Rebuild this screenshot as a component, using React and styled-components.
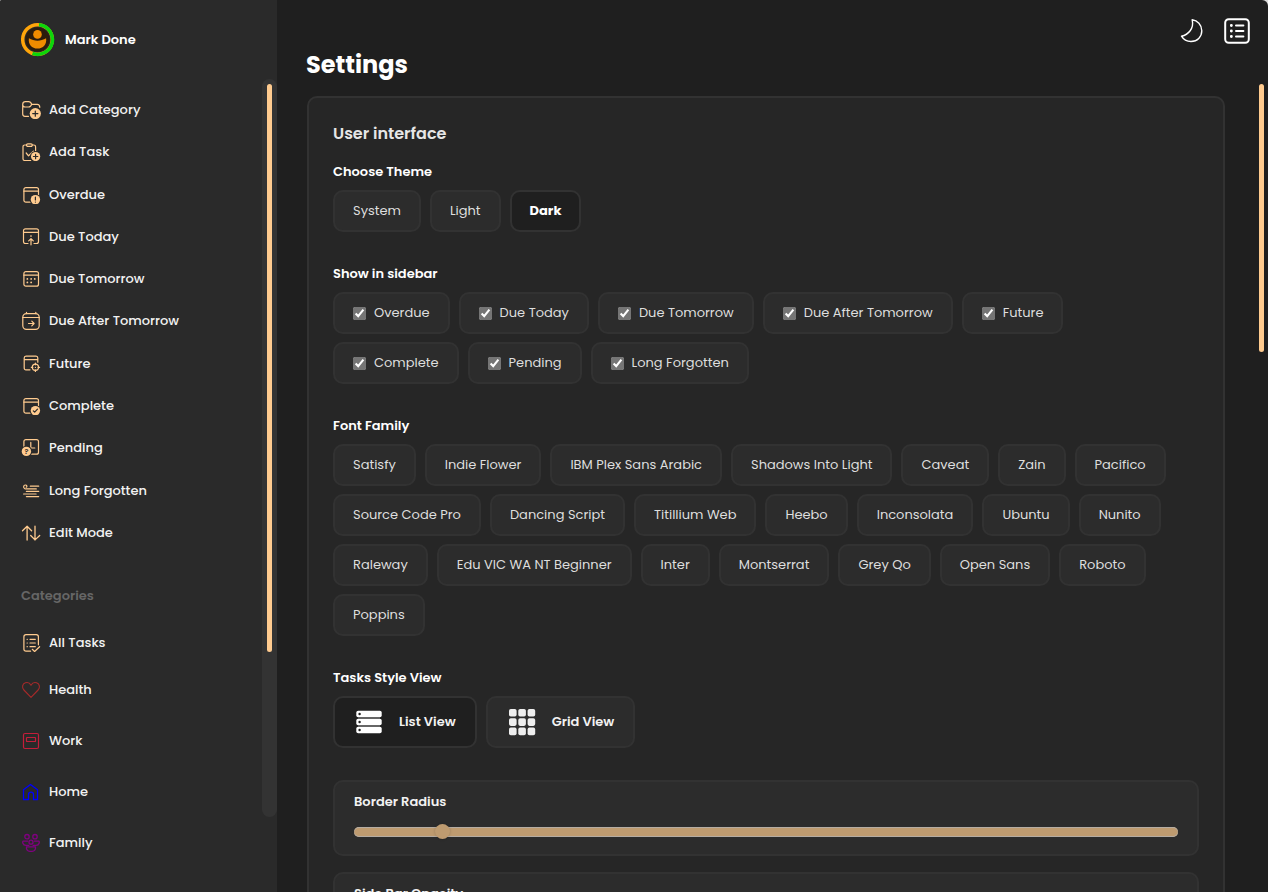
import { useState } from "react";
import styled, { createGlobalStyle } from "styled-components";

const GlobalStyle = createGlobalStyle`
    :root {
        --accent: #ffcb8f;
        --page: #1f1f1f;
        --sidebar: #2a2a2a;
        --panel: #262626;
        --chip: #2c2c2c;
        --line: #323232;
    }
    * {
        box-sizing: border-box;
    }
    body {
        margin: 0;
        background-color: #ddd;
        color: #fff;
        font-family: Poppins, Inter, sans-serif;
        font-size: 13px;
        line-height: 20px;
    }
    button, input {
        font: inherit;
        color: inherit;
    }
    h1, h2, h3, p, ul {
        margin: 0;
        padding: 0;
    }
`
const Layout = styled.div`
    display: flex;
    height: 100vh;
    overflow: hidden;
    border-radius: 2px 6px 0 0;
    background-color: var(--page);
`
const Sidebar = styled.aside`
    flex: 0 0 277px;
    display: flex;
    flex-direction: column;
    background-color: var(--sidebar);
`
const Profile = styled.div`
    display: flex;
    align-items: center;
    gap: 10px;
    height: 79px;
    padding-left: 20px;
    font-weight: 600;
    svg {
        width: 35px;
        height: 35px;
    }
`
const SidebarBody = styled.div`
    flex: 1;
    display: flex;
    min-height: 0;
`
const SidebarScroll = styled.nav`
    flex: 1;
    overflow: hidden;
    padding: 10px 0 0 21px;
`
const NavList = styled.ul`
    display: grid;
    list-style: none;
    min-height: ${({ $minHeight }) => $minHeight || 0}px;
`
const NavItem = styled.li`
    display: flex;
    align-items: center;
    height: ${({ $height }) => ($height ? `${$height}px` : "auto")};
`
const NavLink = styled.a`
    display: flex;
    align-items: center;
    gap: 8px;
    color: #f2f2f2;
    font-weight: 500;
    text-decoration: none;
    svg {
        width: 20px;
        height: 20px;
        margin-bottom: 2px;
        color: ${({ $color }) => $color || "var(--accent)"};
    }
`
const NavHeading = styled.h3`
    padding: 32px 0 15px;
    font-size: 13px;
    font-weight: 600;
    color: #666;
`
const Rail = styled.div`
    flex: 0 0 15px;
    margin-bottom: 75px;
    padding: 5px;
    border-radius: 8px;
    background-color: #333;
`
const RailThumb = styled.div`
    width: 5px;
    height: 78%;
    border-radius: 3px;
    background-color: var(--accent);
`
const Main = styled.main`
    position: relative;
    flex: 1;
    min-width: 0;
`
const PageThumb = styled.div`
    position: absolute;
    top: 84px;
    right: 4px;
    width: 5px;
    height: 30%;
    border-radius: 3px;
    background-color: var(--accent);
`
const Header = styled.header`
    display: flex;
    justify-content: space-between;
    align-items: flex-start;
    height: 96px;
    padding: 18px 18px 0 29px;
`
const PageTitle = styled.h1`
    padding-top: 31px;
    font-size: 24px;
    line-height: 32px;
    font-weight: 700;
`
const HeaderActions = styled.div`
    display: flex;
    gap: 19px;
`
const IconButton = styled.button`
    display: flex;
    padding: 0;
    border: none;
    background: none;
    cursor: pointer;
    svg {
        width: 26px;
        height: 26px;
    }
`
const Panel = styled.section`
    margin: 0 43px 0 30px;
    padding: 24px;
    border: 2px solid var(--line);
    border-radius: 10px;
    background-color: var(--panel);
`
const PanelTitle = styled.h2`
    margin-bottom: 16px;
    font-size: 16px;
    line-height: 24px;
    font-weight: 600;
    color: #e6e6e6;
`
const Group = styled.fieldset`
    min-width: 0;
    margin: 0 0 32px;
    padding: 0;
    border: none;
    legend {
        padding: 0;
        margin-bottom: 8px;
        font-weight: 600;
    }
`
const Chips = styled.div`
    display: flex;
    flex-wrap: wrap;
    gap: 8px 9px;
    padding-right: 8px;
`
const chipColors = ({ $active }) => `
    border: 2px solid var(--line);
    border-radius: 10px;
    background-color: ${$active ? "var(--page)" : "var(--chip)"};
    color: ${$active ? "#fff" : "#dedede"};
`
const Chip = styled.button`
    ${chipColors}
    height: 42px;
    padding: 0 18px;
    font-weight: ${({ $active }) => ($active ? 700 : 400)};
    cursor: pointer;
`
const CheckChip = styled.label`
    ${chipColors}
    display: flex;
    align-items: center;
    gap: 8px;
    height: 42px;
    padding: 0 18px;
    cursor: pointer;
    input {
        width: 13px;
        height: 13px;
        margin: 0;
        accent-color: #757575;
    }
`
const ViewButton = styled.button`
    ${chipColors}
    display: flex;
    align-items: center;
    gap: 16px;
    height: 52px;
    padding: 0 19px 0 20px;
    font-weight: 600;
    color: #f2f2f2;
    cursor: pointer;
    svg {
        width: 28px;
        height: 28px;
    }
`
const SliderCard = styled.div`
    ${chipColors}
    display: flex;
    flex-direction: column;
    gap: 12px;
    height: 76px;
    margin-bottom: 16px;
    padding: 10px 19px;
    label {
        font-weight: 600;
        color: #f2f2f2;
    }
`
const Slider = styled.input`
    appearance: none;
    width: 100%;
    height: 15px;
    margin: 0;
    background: transparent;
    &::-webkit-slider-runnable-track {
        height: 10px;
        border-radius: 5px;
        background-color: #be9b70;
        box-shadow: inset 0 1px #b5aca2, inset 0 -1px #b5aca2;
    }
    &::-webkit-slider-thumb {
        appearance: none;
        width: 15px;
        height: 15px;
        margin-top: -3px;
        border-radius: 50%;
        background-color: #be9b70;
        box-shadow: 0 0 3px rgb(0, 0, 0, 0.2);
    }
`

const Svg = ({ size = 20, width = 1.2, children }) => (
    <svg
        viewBox={`0 0 ${size} ${size}`}
        fill="none"
        stroke="currentColor"
        strokeWidth={width}
        strokeLinecap="round"
        strokeLinejoin="round"
        aria-hidden="true"
    >
        {children}
    </svg>
);

const Badge = ({ x, y, r = 4.7, children }) => (
    <>
        <circle cx={x} cy={y} r={r + 1} fill="#2a2a2a" stroke="none" />
        <circle cx={x} cy={y} r={r} fill="currentColor" stroke="none" />
        <g stroke="#2a2a2a">{children}</g>
    </>
);

const CalendarBox = () => (
    <>
        <rect x="2.9" y="3.6" width="14.6" height="14.6" rx="2" />
        <path d="M2.9 7.2h14.6" />
    </>
);

const icons = {
    addCategory: (
        <Svg>
            <path d="M1.7 5.4C1.7 3.4 2.8 2.6 4.4 2.6h3.2c1.5 0 2.5 1.1 3.1 2.7-.6 1.7-1.6 2.7-3.1 2.7H4.2C2.7 8 1.7 7.2 1.7 5.4ZM10.7 5.3h5.6c1.6 0 2.4.8 2.5 3M1.7 5.4v9.7c0 1.5.8 2.2 2.2 2.2h3.6" />
            <Badge x={14.3} y={14.6} r={5.6}>
                <path d="M14.3 12v5.2M11.7 14.6h5.2" />
            </Badge>
        </Svg>
    ),
    addTask: (
        <Svg>
            <path d="M5.4 4H3.8C2.6 4 2 4.6 2 5.8v11.9C2 18.9 2.6 19.5 3.8 19.5h6M11.4 4h1.4c1.2 0 1.8.6 1.8 1.8v4.4M5.2 12l2.3 2.8 5-4.6" />
            <rect x="5.5" y="2.8" width="5.8" height="2.6" rx="1.3" />
            <Badge x={14.6} y={15.5} r={4.6}>
                <path d="M14.6 13.3v4.4M12.4 15.5h4.4" />
            </Badge>
        </Svg>
    ),
    overdue: (
        <Svg>
            <CalendarBox />
            <Badge x={14.4} y={15.6}>
                <path d="M14.4 13.2v2.8M14.4 18v.1" />
            </Badge>
        </Svg>
    ),
    dueToday: (
        <Svg>
            <path d="M7 17.5H4.5c-1.3 0-2-.7-2-2V4.8c0-1.3.7-2 2-2h11c1.3 0 2 .7 2 2v10.7c0 1.3-.7 2-2 2H13M2.5 6.4h15M10 18.8v-6M7.7 14.9 10 12.6l2.3 2.3M10 10.4v-.8" />
        </Svg>
    ),
    dueTomorrow: (
        <Svg>
            <CalendarBox />
            <path strokeWidth="1.7" d="M6.3 10.9h.1M10.1 10.9h.1M13.7 10.9h.1M6.3 14.4h.1M10.1 14.4h.1" />
        </Svg>
    ),
    dueAfter: (
        <Svg>
            <rect x="1.8" y="3.6" width="16.4" height="15.8" rx="3.6" />
            <path d="M1.8 7.5h16.4M5.5 2.3v1.3M14.8 2.3v1.3M7.5 13.5h5.3M10.8 11.2l2.3 2.3-2.3 2.3" />
        </Svg>
    ),
    future: (
        <Svg>
            <path d="M9 16.8H5c-1.2 0-1.8-.7-1.8-1.8V5c0-1.2.7-1.9 1.8-1.9h10c1.2 0 1.8.7 1.8 1.9v4.2M3.2 6.6h13.6" />
            <circle cx="14.4" cy="14.3" r="3.1" />
            <path d="M14.4 14.3v.1M14.4 10.2v1.6M14.4 16.9v1.6M10.3 14.3h1.6M17 14.3h1.6" />
        </Svg>
    ),
    complete: (
        <Svg>
            <CalendarBox />
            <Badge x={14.4} y={15.6}>
                <path d="m12.3 15.8 1.4 1.4 2.8-3" />
            </Badge>
        </Svg>
    ),
    pending: (
        <Svg>
            <rect x="2.9" y="2.6" width="14.6" height="14.6" rx="2" />
            <path d="M9.8 5.4V11h4" />
            <Badge x={5.4} y={14.4}>
                <text x="5.4" y="17.1" fontSize="7.5" fontWeight="600" textAnchor="middle" fill="#2a2a2a" stroke="none">?</text>
            </Badge>
        </Svg>
    ),
    forgotten: (
        <Svg width={1.2}>
            <path d="M9.3 6.2h8.4M4.6 8.9h10.7M5.4 11.4h12.3M2.6 14h12.5M5.4 16.6h12.3M3.6 8.6C2 7.3 2.5 5 4.3 5c1.7 0 2.2 1.8.9 2.3" />
        </Svg>
    ),
    edit: (
        <Svg width={1.3}>
            <path d="M6.1 18V4.2M1.5 8.8l4.6-4.6 4.5 4.6M14 4.2V18M9.7 13.5l4.3 4.4 4.7-4.4" />
        </Svg>
    ),
    allTasks: (
        <Svg>
            <path d="M9.6 19.2H5c-1.4 0-2.1-.7-2.1-2V4.8c0-1.4.7-2.1 2.1-2.1h10.3c1.4 0 2.1.7 2.1 2.1v8M11.3 17.3l2.3 2.2 5-4.8M6.1 7.3h.2M6.1 11h.2M6.1 14.7h.2M9 7.3h5.3M9 11h5.3M9 14.7h5.3" />
        </Svg>
    ),
    heart: (
        <Svg width={1.1}>
            <path d="M10 18.4 2.9 11C.6 8.6 1.3 4.8 4.4 3.8 6.6 3.1 8.8 4 10 6.2c1.2-2.2 3.4-3.1 5.6-2.4 3.1 1 3.8 4.8 1.5 7.2Z" />
        </Svg>
    ),
    work: (
        <Svg width={1.2}>
            <rect x="2.5" y="3.5" width="15" height="15" rx="1.5" />
            <rect x="5.5" y="7.5" width="9" height="4" rx=".6" />
        </Svg>
    ),
    home: (
        <Svg width={1.3}>
            <path d="M2.5 18.5V8.8L9.5 3.4l7 5.4v9.7h-4v-4.8c0-3.4-5-3.4-5 0v4.8Z" />
        </Svg>
    ),
    family: (
        <Svg width={1.3}>
            <circle cx="6" cy="4.7" r="2.2" />
            <circle cx="14" cy="4.7" r="2.2" />
            <circle cx="10" cy="10.2" r="2" />
            <path d="M6.6 9.1H2.3c-1.2 0-.8 4.300 2.700 4.300h2.800M13.400 9.100h4.300c1.200 0 .8 4.300-2.700 4.300h-2.800M5.500 14.900h9c.4 2.600-1.200 4.400-3.300 4.400H8.800c-2.100 0-3.700-1.800-3.300-4.400Z" />
        </Svg>
    ),
    moon: (
        <Svg size={26} width={1.4}>
            <path d="M13.2 1.8c5.200.6 9.600 5 9.600 11 0 6-4.500 10.700-10.800 10.700-4.100 0-7.600-2-9.500-5.300C9.300 16.800 15.200 10.500 13.200 1.800Z" />
        </Svg>
    ),
    menu: (
        <Svg size={26} width={2}>
            <rect x="1.2" y="1.2" width="23.6" height="23.6" rx="3.5" />
            <path strokeWidth="2.8" d="M7.3 7.5h.1M7.3 13h.1M7.3 18.5h.1" />
            <path d="M12 7.5h7.4M12 13h7.4M12 18.5h7.4" />
        </Svg>
    ),
};

const Avatar = () => (
    <svg viewBox="0 0 35 35" fill="none" aria-hidden="true">
        <circle cx="17.5" cy="17.5" r="12" fill="#2b1c0c" />
        <circle cx="17.5" cy="17.5" r="14.8" stroke="#ffa50a" strokeWidth="3.5" />
        <path d="M19 2.8A14.8 14.8 0 1 1 12.5 31.4" stroke="#0bd60b" strokeWidth="3.5" />
        <circle cx="17.5" cy="12.4" r="4.3" fill="#f08c00" />
        <path d="M8.9 16.2c5.4 3.3 11.8 3.3 17.2 0 .9 6-3 10.4-8.6 10.4s-9.5-4.4-8.6-10.4Z" fill="#f08c00" />
    </svg>
);

const ListIcon = () => (
    <svg viewBox="0 0 28 28" aria-hidden="true">
        {[2.8, 10.8, 18.8].map((y) => (
            <g key={y}>
                <rect x="1.3" y={y} width="25.4" height="6.4" rx="1.8" fill="#fff" />
                <circle cx="4.6" cy={y + 3.2} r="1.2" fill="#1f1f1f" />
            </g>
        ))}
        <path d="M3 10h22M3 18h22" stroke="#777" strokeWidth="1" />
    </svg>
);

const GridIcon = () => (
    <svg viewBox="0 0 28 28" fill="#eee" aria-hidden="true">
        {[1, 10.3, 19.6].map((y) => [1, 10.3, 19.6].map((x) => (
            <rect key={`${x}-${y}`} x={x} y={y} width="7.6" height="7.6" rx="1.8" />
        )))}
    </svg>
);

const links = [
    ["Add Category", "addCategory"],
    ["Add Task", "addTask"],
    ["Overdue", "overdue"],
    ["Due Today", "dueToday"],
    ["Due Tomorrow", "dueTomorrow"],
    ["Due After Tomorrow", "dueAfter"],
    ["Future", "future"],
    ["Complete", "complete"],
    ["Pending", "pending"],
    ["Long Forgotten", "forgotten"],
    ["Edit Mode", "edit"],
];

const categories = [
    { name: "All Tasks", icon: "allTasks", height: 43 },
    { name: "Health", icon: "heart", color: "#a52a2a", height: 51 },
    { name: "Work", icon: "work", color: "#c41e3a", height: 51 },
    { name: "Home", icon: "home", color: "#0000ff", height: 51 },
    { name: "Family", icon: "family", color: "#800080", height: 51 },
];

const themes = ["System", "Light", "Dark"];

const sidebarOptions = [
    "Overdue", "Due Today", "Due Tomorrow", "Due After Tomorrow",
    "Future", "Complete", "Pending", "Long Forgotten",
];

const fonts = [
    "Satisfy", "Indie Flower", "IBM Plex Sans Arabic", "Shadows Into Light", "Caveat", "Zain", "Pacifico",
    "Source Code Pro", "Dancing Script", "Titillium Web", "Heebo", "Inconsolata", "Ubuntu", "Nunito",
    "Raleway", "Edu VIC WA NT Beginner", "Inter", "Montserrat", "Grey Qo", "Open Sans", "Roboto",
    "Poppins",
];

const App = () => {
    const [theme, setTheme] = useState("Dark");
    const [view, setView] = useState("List View");

    return (
        <Layout>
            <GlobalStyle />
            <Sidebar>
                <Profile>
                    <Avatar />
                    Mark Done
                </Profile>
                <SidebarBody>
                    <SidebarScroll>
                        <NavList $minHeight={465}>
                            {links.map(([name, icon]) => (
                                <NavItem key={name}>
                                    <NavLink href="#">{icons[icon]}{name}</NavLink>
                                </NavItem>
                            ))}
                        </NavList>
                        <NavHeading>Categories</NavHeading>
                        <NavList>
                            {categories.map(({ name, icon, color, height }) => (
                                <NavItem key={name} $height={height}>
                                    <NavLink href="#" $color={color}>{icons[icon]}{name}</NavLink>
                                </NavItem>
                            ))}
                        </NavList>
                    </SidebarScroll>
                    <Rail>
                        <RailThumb />
                    </Rail>
                </SidebarBody>
            </Sidebar>
            <Main>
                <Header>
                    <PageTitle>Settings</PageTitle>
                    <HeaderActions>
                        <IconButton aria-label="Dark mode">{icons.moon}</IconButton>
                        <IconButton aria-label="Menu">{icons.menu}</IconButton>
                    </HeaderActions>
                </Header>
                <Panel>
                    <PanelTitle>User interface</PanelTitle>
                    <Group>
                        <legend>Choose Theme</legend>
                        <Chips>
                            {themes.map((name) => (
                                <Chip key={name} $active={theme === name} onClick={() => setTheme(name)}>
                                    {name}
                                </Chip>
                            ))}
                        </Chips>
                    </Group>
                    <Group>
                        <legend>Show in sidebar</legend>
                        <Chips>
                            {sidebarOptions.map((name) => (
                                <CheckChip key={name}>
                                    <input type="checkbox" defaultChecked />
                                    {name}
                                </CheckChip>
                            ))}
                        </Chips>
                    </Group>
                    <Group>
                        <legend>Font Family</legend>
                        <Chips>
                            {fonts.map((name) => (
                                <Chip key={name}>{name}</Chip>
                            ))}
                        </Chips>
                    </Group>
                    <Group>
                        <legend>Tasks Style View</legend>
                        <Chips>
                            <ViewButton $active={view === "List View"} onClick={() => setView("List View")}>
                                <ListIcon />
                                List View
                            </ViewButton>
                            <ViewButton $active={view === "Grid View"} onClick={() => setView("Grid View")}>
                                <GridIcon />
                                Grid View
                            </ViewButton>
                        </Chips>
                    </Group>
                    <SliderCard>
                        <label htmlFor="border-radius">Border Radius</label>
                        <Slider id="border-radius" type="range" defaultValue={10} />
                    </SliderCard>
                    <SliderCard>
                        <label htmlFor="sidebar-opacity">Side Bar Opacity</label>
                        <Slider id="sidebar-opacity" type="range" defaultValue={100} />
                    </SliderCard>
                </Panel>
                <PageThumb />
            </Main>
        </Layout>
    );
};

export default App;
